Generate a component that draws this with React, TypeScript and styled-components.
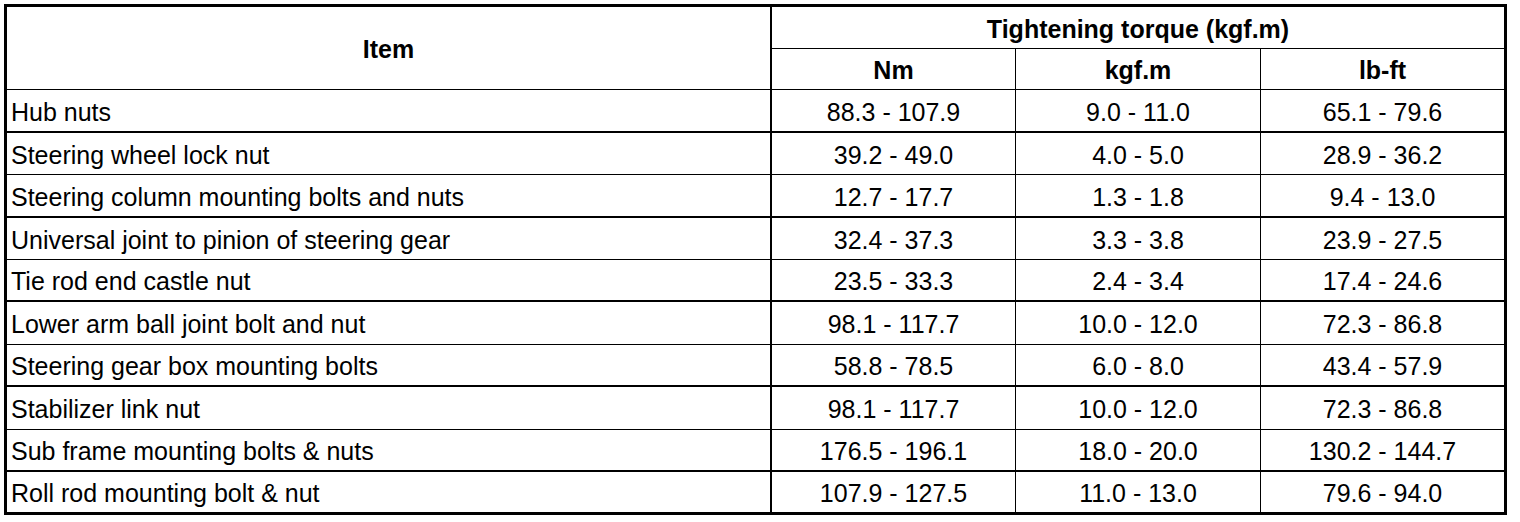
import React from "react";
import styled, { createGlobalStyle } from "styled-components";

const Global = createGlobalStyle`
  html, body { margin: 0; padding: 0; background: #fff; }
  body { font-family: "Liberation Sans", Arial, sans-serif; }
`;

const Page = styled.div`
  padding: 4px;
`;

const Table = styled.table`
  border: 3px solid #000;
  border-collapse: separate;
  border-spacing: 0;
  table-layout: fixed;
  width: 1503px;
  font-family: "Liberation Sans", Arial, sans-serif;
  font-size: 25px;
  color: #000;
`;

const Row = styled.tr<{ $h: number }>`
  height: ${(p) => p.$h}px;
`;

const Cell = styled.td<{ $right?: number; $bottom?: number; $left?: boolean; $bold?: boolean }>`
  padding: 3px 0 0 ${(p) => (p.$left ? 4 : 0)}px;
  text-align: ${(p) => (p.$left ? "left" : "center")};
  vertical-align: middle;
  font-weight: ${(p) => (p.$bold ? 700 : 400)};
  border-right: ${(p) => p.$right ?? 0}px solid #000;
  border-bottom: ${(p) => p.$bottom ?? 0}px solid #000;
  white-space: nowrap;
  line-height: 1;
  box-sizing: border-box;
`;

const rows: [string, string, string, string][] = [
  ["Hub nuts", "88.3 - 107.9", "9.0 - 11.0", "65.1 - 79.6"],
  ["Steering wheel lock nut", "39.2 - 49.0", "4.0 - 5.0", "28.9 - 36.2"],
  ["Steering column mounting bolts and nuts", "12.7 - 17.7", "1.3 - 1.8", "9.4 - 13.0"],
  ["Universal joint to pinion of steering gear", "32.4 - 37.3", "3.3 - 3.8", "23.9 - 27.5"],
  ["Tie rod end castle nut", "23.5 - 33.3", "2.4 - 3.4", "17.4 - 24.6"],
  ["Lower arm ball joint bolt and nut", "98.1 - 117.7", "10.0 - 12.0", "72.3 - 86.8"],
  ["Steering gear box mounting bolts", "58.8 - 78.5", "6.0 - 8.0", "43.4 - 57.9"],
  ["Stabilizer link nut", "98.1 - 117.7", "10.0 - 12.0", "72.3 - 86.8"],
  ["Sub frame mounting bolts & nuts", "176.5 - 196.1", "18.0 - 20.0", "130.2 - 144.7"],
  ["Roll rod mounting bolt & nut", "107.9 - 127.5", "11.0 - 13.0", "79.6 - 94.0"],
];

const heights = [43, 42, 43, 42, 42, 43, 42, 43, 42, 40];

export default function App() {
  return (
    <>
      <Global />
      <Page>
        <Table>
          <colgroup>
            <col style={{ width: 765 }} />
            <col style={{ width: 244 }} />
            <col style={{ width: 245 }} />
            <col style={{ width: 243 }} />
          </colgroup>
          <thead>
            <Row $h={42}>
              <Cell as="th" rowSpan={2} $right={2} $bottom={1} $bold>
                Item
              </Cell>
              <Cell as="th" colSpan={3} $bottom={1} $bold>
                Tightening torque (kgf.m)
              </Cell>
            </Row>
            <Row $h={41}>
              <Cell as="th" $right={1} $bottom={1} $bold>
                Nm
              </Cell>
              <Cell as="th" $right={1} $bottom={1} $bold>
                kgf.m
              </Cell>
              <Cell as="th" $bottom={1} $bold>
                lb-ft
              </Cell>
            </Row>
          </thead>
          <tbody>
            {rows.map((r, i) => {
              const last = i === rows.length - 1;
              const b = last ? 0 : i % 2 === 0 ? 2 : 1;
              return (
                <Row key={i} $h={heights[i]}>
                  <Cell $left $right={2} $bottom={b}>
                    {r[0]}
                  </Cell>
                  <Cell $right={1} $bottom={b}>
                    {r[1]}
                  </Cell>
                  <Cell $right={1} $bottom={b}>
                    {r[2]}
                  </Cell>
                  <Cell $bottom={b}>{r[3]}</Cell>
                </Row>
              );
            })}
          </tbody>
        </Table>
      </Page>
    </>
  );
}
